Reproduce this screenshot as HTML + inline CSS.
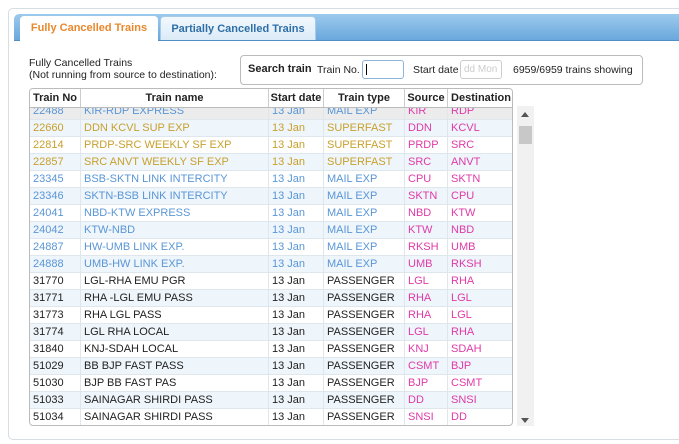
<!DOCTYPE html><html><head><style>
body{margin:0;width:679px;height:444px;background:#fff;font-family:"Liberation Sans",Arial,sans-serif;font-size:11px;position:relative;overflow:hidden;color:#222}
.outer{position:absolute;left:8px;top:8px;width:700px;height:430px;border:1px solid #d6dde3;border-radius:5px;background:#fff}
.bar{position:absolute;left:14px;top:14px;width:680px;height:26px;background:linear-gradient(#9ccaee,#6aa8dc);border-radius:5px 0 0 0;border-bottom:1px solid #4f8fc6}
.tab{position:absolute;top:16px;height:24px;line-height:24px;font-weight:bold;font-size:11px;text-align:center;border-radius:4px 4px 0 0}
.t1{left:20px;width:138px;background:#fff;color:#e8882c;height:25px}
.t2{left:160px;width:156px;background:linear-gradient(#f2f8fd,#dcebf8);color:#2f6fa7;border:1px solid #a8cbe8;border-bottom:none;box-sizing:border-box}
.lbl{position:absolute;left:29px;top:57px;line-height:12px;font-size:10.5px;color:#222}
.sbox{position:absolute;left:240px;top:55px;width:403px;height:30px;border:1px solid #bbb;border-radius:4px;box-sizing:border-box;font-size:10.5px}
.sbox span{position:absolute;top:8px}
.inp{position:absolute;border:1px solid #8ab4dc;border-radius:3px;box-sizing:border-box;background:#fff}
.tbl{position:absolute;left:29px;top:88px;width:484px;height:338px;border:1px solid #bbb;border-radius:4px;overflow:hidden;box-sizing:border-box}
.hd{position:absolute;left:0;top:0;height:18px;width:484px;background:#fff;border-bottom:1px solid #bbb;z-index:2;font-weight:bold;font-size:11px}
.hd div,.r div{position:absolute;top:0;box-sizing:border-box;white-space:nowrap;overflow:hidden}
.hd div{line-height:18px;text-align:center;border-right:1px solid #ccc}
.r{position:absolute;left:0;width:484px;height:17px;border-bottom:1px solid #dfe6ec;box-sizing:border-box}
.r div{line-height:16px;padding-left:3px;border-right:1px solid #dfe6ec;height:17px}
.r.a{background:#eef5fb}
.b{color:#5a96d6}.g{color:#c8a02c}.k{color:#222}
.p{color:#e03aa8!important}
.sb{position:absolute;left:517px;top:106px;width:17px;height:320px;background:#f1f1f1}
</style></head><body>
<div class="outer"></div>
<div class="bar"></div>
<div class="tab t1">Fully Cancelled Trains</div>
<div class="tab t2">Partially Cancelled Trains</div>
<div class="lbl">Fully Cancelled Trains<br>(Not running from source to destination):</div>
<div class="sbox">
<span style="left:7px;font-weight:bold;font-size:11px;top:7px">Search train</span>
<span style="left:76px">Train No.</span>
<div class="inp" style="left:121px;top:4px;width:42px;height:19px"><div style="position:absolute;left:3px;top:3px;width:1px;height:11px;background:#000"></div></div>
<span style="left:172px">Start date</span>
<div class="inp" style="left:219px;top:4px;width:42px;height:19px;border-color:#ccc;color:#ccc;font-size:10px;line-height:17px;padding-left:3px">dd Mon</div>
<span style="left:272px">6959/6959 trains showing</span>
</div>
<div class="tbl">
<div class="hd">
<div style="left:0;width:51px">Train No</div><div style="left:51px;width:188px">Train name</div><div style="left:239px;width:55px">Start date</div><div style="left:294px;width:81px">Train type</div><div style="left:375px;width:43px">Source</div><div style="left:418px;width:66px;border:none">Destination</div>
</div>
<div id="rows"></div>
</div>
<div class="sb"><div style="position:absolute;left:4px;top:6px;border:4px solid transparent;border-bottom:5px solid #555;border-top:none"></div>
<div style="position:absolute;left:2px;top:20px;width:13px;height:18px;background:#c8c8c8"></div>
<div style="position:absolute;left:4px;top:312px;border:4px solid transparent;border-top:5px solid #555;border-bottom:none"></div></div>
<script>
var d=[["22488","KIR-RDP EXPRESS","MAIL EXP","KIR","RDP","b"],["22660","DDN KCVL SUP EXP","SUPERFAST","DDN","KCVL","g"],["22814","PRDP-SRC WEEKLY SF EXP","SUPERFAST","PRDP","SRC","g"],["22857","SRC ANVT WEEKLY SF EXP","SUPERFAST","SRC","ANVT","g"],["23345","BSB-SKTN LINK INTERCITY","MAIL EXP","CPU","SKTN","b"],["23346","SKTN-BSB LINK INTERCITY","MAIL EXP","SKTN","CPU","b"],["24041","NBD-KTW EXPRESS","MAIL EXP","NBD","KTW","b"],["24042","KTW-NBD","MAIL EXP","KTW","NBD","b"],["24887","HW-UMB LINK EXP.","MAIL EXP","RKSH","UMB","b"],["24888","UMB-HW LINK EXP.","MAIL EXP","UMB","RKSH","b"],["31770","LGL-RHA EMU PGR","PASSENGER","LGL","RHA","k"],["31771","RHA -LGL EMU PASS","PASSENGER","RHA","LGL","k"],["31773","RHA LGL PASS","PASSENGER","RHA","LGL","k"],["31774","LGL RHA LOCAL","PASSENGER","LGL","RHA","k"],["31840","KNJ-SDAH LOCAL","PASSENGER","KNJ","SDAH","k"],["51029","BB BJP FAST PASS","PASSENGER","CSMT","BJP","k"],["51030","BJP BB FAST PAS","PASSENGER","BJP","CSMT","k"],["51033","SAINAGAR SHIRDI PASS","PASSENGER","DD","SNSI","k"],["51034","SAINAGAR SHIRDI PASS","PASSENGER","SNSI","DD","k"]];
var h="";d.forEach(function(r,i){var bg=i==0?"background:#ececec;":"";h+='<div class="r '+(i%2?"a ":"")+r[5]+'" style="top:'+(14+i*17)+'px;'+bg+'"><div style="left:0;width:51px">'+r[0]+'</div><div style="left:51px;width:188px">'+r[1]+'</div><div style="left:239px;width:55px">13 Jan</div><div style="left:294px;width:81px">'+r[2]+'</div><div class="p" style="left:375px;width:43px">'+r[3]+'</div><div class="p" style="left:418px;width:66px;border:none">'+r[4]+'</div></div>'});
document.getElementById("rows").innerHTML=h;
</script>
</body></html>
